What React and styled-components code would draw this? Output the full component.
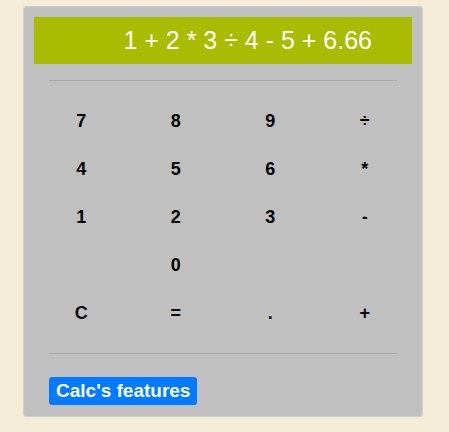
import React, { useState } from "react";
import styled, { createGlobalStyle } from "styled-components";

const GlobalStyle = createGlobalStyle`
  html, body {
    margin: 0;
    padding: 0;
    background: #f5ecd7;
    font-family: "Liberation Sans", Arial, sans-serif;
  }
`;

const Card = styled.div`
  box-sizing: border-box;
  width: 400px;
  margin: 6px 0 0 23px;
  padding: 10px 10px 11px;
  background: #c0c0c0;
  border: 1px solid #d0d0d0;
  border-radius: 3px;
`;

const Display = styled.div`
  height: 47px;
  background: #a9bc00;
  color: #fff;
  font-size: 25px;
  line-height: 47px;
  text-align: right;
  padding-right: 40px;
  white-space: nowrap;
`;

const Rule = styled.hr`
  margin: ${(p) => p.$top || 16}px 15px ${(p) => p.$bottom || 16}px;
  border: 0;
  border-top: 1px solid #a9a9a9;
`;

const Keys = styled.div`
  display: grid;
  grid-template-columns: repeat(4, 1fr);
  grid-auto-rows: 48px;
`;

const Key = styled.button`
  border: 0;
  background: transparent;
  font-family: "Liberation Sans", Arial, sans-serif;
  font-weight: bold;
  font-size: 18px;
  color: #000;
  cursor: pointer;
  padding: 0;
`;

const Features = styled.button`
  margin-left: 15px;
  height: 28px;
  padding: 0 7px;
  border: 0;
  border-radius: 3px;
  background: #007bff;
  color: #fff;
  font-family: "Liberation Sans", Arial, sans-serif;
  font-weight: bold;
  font-size: 19px;
  cursor: pointer;
`;

const keys = [
  "7", "8", "9", "÷",
  "4", "5", "6", "*",
  "1", "2", "3", "-",
  "", "0", "", "",
  "C", "=", ".", "+",
];

export default function App() {
  const [expr] = useState("1 + 2 * 3 ÷ 4 - 5 + 6.66");

  return (
    <>
      <GlobalStyle />
      <Card>
        <Display>{expr}</Display>
        <Rule />
        <Keys>
          {keys.map((k, i) => (
            <Key key={i}>{k}</Key>
          ))}
        </Keys>
        <Rule $bottom={23} />
        <Features>Calc's features</Features>
      </Card>
    </>
  );
}
